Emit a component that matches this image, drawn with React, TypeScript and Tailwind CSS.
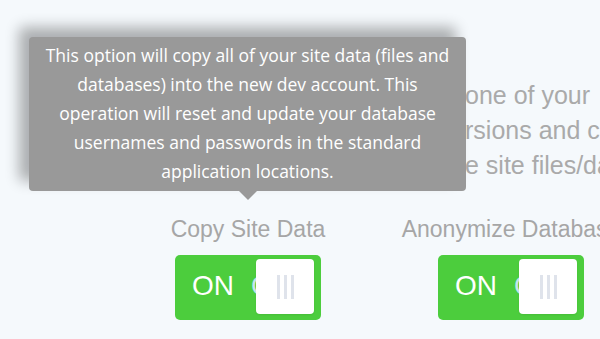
import React from 'react';

function Toggle() {
  return (
    <div className="relative w-[146px] h-[65px] rounded-[5px] bg-[#4ccd3d] overflow-hidden">
      {/* track labels */}
      <span className="absolute left-[17px] top-[17px] text-[28px] leading-[28px] text-white">ON</span>
      <span className="absolute left-[76px] top-[17px] text-[28px] leading-[28px] text-[#c6e6ee]">OFF</span>
      {/* knob */}
      <div className="absolute left-[81px] top-[4px] w-[58px] h-[55px] rounded-[4px] bg-white flex items-center justify-center gap-[4px] shadow-[0_1px_2px_rgba(0,0,0,0.08)]">
        <span className="w-[3px] h-[24px] bg-[#dfe3eb]" />
        <span className="w-[3px] h-[24px] bg-[#dfe3eb]" />
        <span className="w-[3px] h-[24px] bg-[#dfe3eb]" />
      </div>
    </div>
  );
}

function Option({ label }: { label: string }) {
  return (
    <div className="w-[146px] flex flex-col items-center">
      <div className="whitespace-nowrap text-[23px] leading-[28px] text-[#a6a6a6]">{label}</div>
      <div className="mt-[12px]">
        <Toggle />
      </div>
    </div>
  );
}

export default function App() {
  return (
    <div className="relative w-[600px] h-[339px] overflow-hidden bg-[#f5f9fc] font-['Liberation_Sans',Arial,sans-serif]">
      {/* Intro copy (mostly hidden behind the tooltip) */}
      <div className="pt-[78px] pl-[465px] whitespace-nowrap text-[25px] leading-[35px] text-[#aaaaaa]">
        <div>one of your</div>
        <div>rsions and c</div>
        <div>e site files/da</div>
      </div>

      {/* Options */}
      <div className="mt-[32px] flex pl-[175px] gap-[117px]">
        <Option label="Copy Site Data" />
        <Option label="Anonymize Database" />
      </div>

      {/* Tooltip */}
      <div className="absolute left-[29px] top-[37px] w-[437px] h-[154px] rounded-[4px] bg-[#999999] shadow-[-10px_-10px_14px_rgba(0,0,0,0.3)]">
        <p className="pt-[4px] text-center whitespace-nowrap text-white text-[17.5px] leading-[29px] font-['Open_Sans',sans-serif]">
          This option will copy all of your site data (files and
          <br />
          databases) into the new dev account. This
          <br />
          operation will reset and update your database
          <br />
          usernames and passwords in the standard
          <br />
          application locations.
        </p>
        <div className="absolute left-[210px] top-[154px] w-0 h-0 border-x-[9px] border-x-transparent border-t-[9px] border-t-[#999999]" />
      </div>
    </div>
  );
}
